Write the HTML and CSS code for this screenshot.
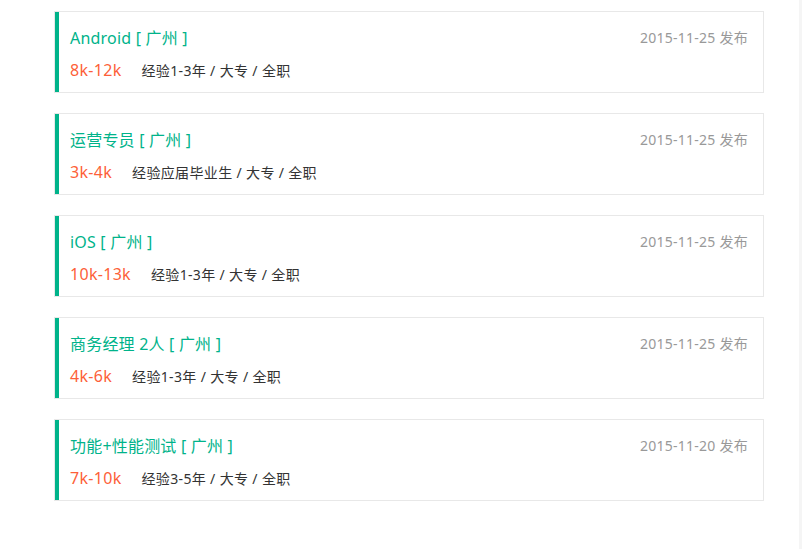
FILE: index.html
```html
<!DOCTYPE html>
<html lang="zh-CN">
<head>
    <meta charset="UTF-8">
    <meta name="viewport" content="width=device-width, initial-scale=1.0">
    <title>职位列表</title>
    <link rel="stylesheet" href="styles.css">
</head>
<body>

    <ul class="job-list">
        <li class="job">
            <div class="job-top">
                <a class="job-name" href="#">Android [ 广州 ]</a>
                <span class="job-date">2015-11-25 发布</span>
            </div>
            <div class="job-info">
                <span class="salary">8k-12k</span>
                <span class="require">经验1-3年 / 大专 / 全职</span>
            </div>
        </li>
        <li class="job">
            <div class="job-top">
                <a class="job-name" href="#">运营专员 [ 广州 ]</a>
                <span class="job-date">2015-11-25 发布</span>
            </div>
            <div class="job-info">
                <span class="salary">3k-4k</span>
                <span class="require">经验应届毕业生 / 大专 / 全职</span>
            </div>
        </li>
        <li class="job">
            <div class="job-top">
                <a class="job-name" href="#">iOS [ 广州 ]</a>
                <span class="job-date">2015-11-25 发布</span>
            </div>
            <div class="job-info">
                <span class="salary">10k-13k</span>
                <span class="require">经验1-3年 / 大专 / 全职</span>
            </div>
        </li>
        <li class="job">
            <div class="job-top">
                <a class="job-name" href="#">商务经理 2人 [ 广州 ]</a>
                <span class="job-date">2015-11-25 发布</span>
            </div>
            <div class="job-info">
                <span class="salary">4k-6k</span>
                <span class="require">经验1-3年 / 大专 / 全职</span>
            </div>
        </li>
        <li class="job">
            <div class="job-top">
                <a class="job-name" href="#">功能+性能测试 [ 广州 ]</a>
                <span class="job-date">2015-11-20 发布</span>
            </div>
            <div class="job-info">
                <span class="salary">7k-10k</span>
                <span class="require">经验3-5年 / 大专 / 全职</span>
            </div>
        </li>
    </ul>

    <div class="scroll-track"></div>

</body>
</html>
```

FILE: styles.css
```css
body {
    margin: 0;
    font-family: "Noto Sans", "Noto Sans CJK SC", sans-serif;
    background-color: #fff;
    color: #333;
}

.job-list {
    list-style: none;
    margin: 0;
    padding: 11px 0 0 55px;
    width: 709px;
}

.job {
    border: 1px solid #e8e8e8;
    border-left: 0;
    box-shadow: inset 4px 0 0 #00b38a;
    padding: 13px 15px 11px 15px;
    margin-bottom: 20px;
    position: relative;
}

.job::before {
    content: "";
    position: absolute;
    left: -1px;
    top: -1px;
    bottom: -1px;
    width: 1px;
    background-color: #e8e8e8;
}

.job-top {
    display: flex;
    justify-content: space-between;
    align-items: center;
    height: 24px;
}

.job-name {
    color: #00b38a;
    font-size: 16px;
    letter-spacing: 0.2px;
    text-decoration: none;
}

.job-date {
    color: #999;
    font-size: 14px;
    letter-spacing: 0.25px;
}

.job-info {
    display: flex;
    align-items: center;
    margin-top: 10px;
    height: 22px;
}

.salary {
    color: #fd5f39;
    font-size: 16px;
    letter-spacing: 0.3px;
    margin-right: 20px;
}

.require {
    font-size: 14px;
    letter-spacing: 0.35px;
    color: #333;
}

.scroll-track {
    position: fixed;
    top: 0;
    right: 0;
    width: 3px;
    height: 100%;
    background-color: #f5f5f5;
}
```
